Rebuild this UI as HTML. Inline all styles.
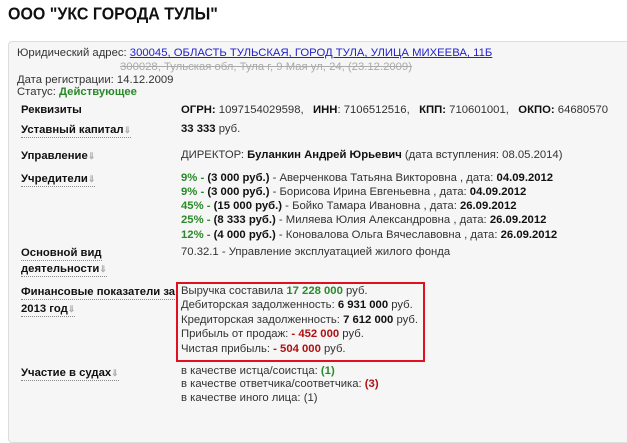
<!DOCTYPE html>
<html><head><meta charset="utf-8"><style>
body{margin:0;width:627px;height:406px;overflow:hidden;background:#fff;font-family:"Liberation Sans",Arial,sans-serif;font-size:11.3px;color:#333;position:relative}
h1{position:absolute;left:8px;top:5px;margin:0;font-size:16px;font-weight:bold;color:#111;transform:scaleY(1.1);transform-origin:left top}
.panel{position:absolute;left:8px;top:41px;width:640px;height:400px;background:#f6f6f6;border:1px solid #ddd;border-radius:4px}
.t{position:absolute;white-space:nowrap;line-height:14px}
.l{font-weight:bold;color:#111;border-bottom:1px dotted #888;padding-bottom:1px}
.l i{font-style:normal;color:#aaa;font-size:9px}
b{color:#111}
.g{color:#2a8a2a;font-weight:bold}
.r{color:#b01010;font-weight:bold}
a{color:#2222cc;text-decoration:underline}
.box{position:absolute;left:176px;top:282px;width:245px;height:76px;border:2px solid #e01020}
</style></head><body>
<h1>ООО "УКС ГОРОДА ТУЛЫ"</h1>
<div class="panel"></div>
<div class="t" style="left:17px;top:46px">Юридический адрес: <a>300045, ОБЛАСТЬ ТУЛЬСКАЯ, ГОРОД ТУЛА, УЛИЦА МИХЕЕВА, 11Б</a></div>
<div class="t" style="left:120px;top:60px;color:#aaa;text-decoration:line-through">300028, Тульская обл, Тула г, 9 Мая ул, 24, (23.12.2009)</div>
<div class="t" style="left:17px;top:73px">Дата регистрации: 14.12.2009</div>
<div class="t" style="left:17px;top:85px">Статус: <span class="g">Действующее</span></div>
<div class="t" style="left:21px;top:103px"><b>Реквизиты</b></div>
<div class="t" style="left:181px;top:103px"><b>ОГРН:</b> 1097154029598, &nbsp;&nbsp;<b>ИНН</b>: 7106512516, &nbsp;&nbsp;<b>КПП:</b> 710601001, &nbsp;&nbsp;<b>ОКПО:</b> 64680570</div>
<div class="t" style="left:21px;top:123px"><span class="l">Уставный капитал<i>⇓</i></span></div>
<div class="t" style="left:181px;top:122px"><b>33 333</b> руб.</div>
<div class="t" style="left:21px;top:149px"><span class="l" style="border:0">Управление<i>⇓</i></span></div>
<div class="t" style="left:181px;top:148px">ДИРЕКТОР: <b>Буланкин Андрей Юрьевич</b> (дата вступления: 08.05.2014)</div>
<div class="t" style="left:21px;top:172px"><span class="l">Учредители<i>⇓</i></span></div>
<div class="t" style="left:181px;top:171px"><span class="g">9% - </span><b>(3 000 руб.)</b> - Аверченкова Татьяна Викторовна , дата: <b>04.09.2012</b></div>
<div class="t" style="left:181px;top:185px"><span class="g">9% - </span><b>(3 000 руб.)</b> - Борисова Ирина Евгеньевна , дата: <b>04.09.2012</b></div>
<div class="t" style="left:181px;top:199px"><span class="g">45% - </span><b>(15 000 руб.)</b> - Бойко Тамара Ивановна , дата: <b>26.09.2012</b></div>
<div class="t" style="left:181px;top:213px"><span class="g">25% - </span><b>(8 333 руб.)</b> - Миляева Юлия Александровна , дата: <b>26.09.2012</b></div>
<div class="t" style="left:181px;top:228px"><span class="g">12% - </span><b>(4 000 руб.)</b> - Коновалова Ольга Вячеславовна , дата: <b>26.09.2012</b></div>
<div class="t" style="left:21px;top:246px"><span class="l">Основной вид</span></div>
<div class="t" style="left:21px;top:262px"><span class="l">деятельности<i>⇓</i></span></div>
<div class="t" style="left:181px;top:245px">70.32.1 - Управление эксплуатацией жилого фонда</div>
<div class="t" style="left:21px;top:285px"><span class="l">Финансовые показатели за</span></div>
<div class="t" style="left:21px;top:302px"><span class="l">2013 год<i>⇓</i></span></div>
<div class="box"></div>
<div class="t" style="left:181px;top:284px">Выручка составила <span class="g">17 228 000</span> руб.</div>
<div class="t" style="left:181px;top:298px">Дебиторская задолженность: <b>6 931 000</b> руб.</div>
<div class="t" style="left:181px;top:313px">Кредиторская задолженность: <b>7 612 000</b> руб.</div>
<div class="t" style="left:181px;top:327px">Прибыль от продаж: <span class="r">- 452 000</span> руб.</div>
<div class="t" style="left:181px;top:342px">Чистая прибыль: <span class="r">- 504 000</span> руб.</div>
<div class="t" style="left:21px;top:366px"><span class="l">Участие в судах<i>⇓</i></span></div>
<div class="t" style="left:181px;top:364px">в качестве истца/соистца: <span class="g">(1)</span></div>
<div class="t" style="left:181px;top:377px">в качестве ответчика/соответчика: <span class="r">(3)</span></div>
<div class="t" style="left:181px;top:391px">в качестве иного лица: (1)</div>
</body></html>
